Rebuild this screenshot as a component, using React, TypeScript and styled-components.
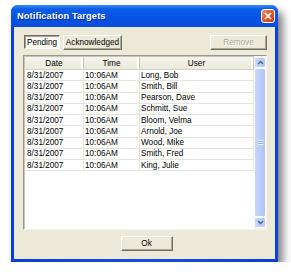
import React from "react";
import styled, { createGlobalStyle } from "styled-components";

const GlobalStyle = createGlobalStyle`
  html, body {
    margin: 0;
    padding: 0;
    background: #ffffff;
  }
  body {
    font-family: "Liberation Sans", Arial, sans-serif;
  }
`;

const Page = styled.div`
  padding: 5px 0 0 11px;
`;

const Window = styled.div`
  width: 267px;
  height: 257px;
  display: flex;
  flex-direction: column;
  border-radius: 7px 7px 0 0;
  overflow: hidden;
  box-shadow: 5px 6px 9px rgba(0, 0, 0, 0.5);
  background: #0838d8;
`;

const TitleBar = styled.div`
  height: 22px;
  flex: none;
  display: flex;
  align-items: center;
  justify-content: space-between;
  padding: 0 3px 0 6px;
  background: linear-gradient(
    to bottom,
    #3d8df5 0%,
    #0a5ee8 18%,
    #0552e4 60%,
    #0a4fd8 100%
  );
`;

const Title = styled.span`
  color: #ffffff;
  font-weight: bold;
  font-size: 9.3px;
  letter-spacing: 0.1px;
  text-shadow: 1px 1px 0 #0a2a8a;
`;

const CloseButton = styled.div`
  width: 14px;
  height: 14px;
  box-sizing: border-box;
  border: 1px solid #ffffff;
  border-radius: 3px;
  background: linear-gradient(135deg, #f09a78 0%, #e2582e 45%, #c23e14 100%);
  display: flex;
  align-items: center;
  justify-content: center;
`;

const Frame = styled.div`
  flex: 1;
  display: flex;
  padding: 0 3px 3px 3px;
  background: linear-gradient(to right, #0a3ed8, #1150e0 50%, #0a3ed8);
`;

const Content = styled.div`
  flex: 1;
  background: #ece9d8;
  display: flex;
  flex-direction: column;
  padding: 8px 8px 8px 9px;
`;

const Toolbar = styled.div`
  display: flex;
  align-items: center;
  gap: 3px;
  height: 14px;
  padding-left: 1px;
`;

const Spacer = styled.div`
  flex: 1;
`;

const Button = styled.div<{ $pressed?: boolean; $disabled?: boolean; $width: number }>`
  width: ${(p) => p.$width}px;
  height: ${(p) => (p.$pressed ? 14 : 15)}px;
  box-sizing: border-box;
  display: flex;
  align-items: center;
  justify-content: center;
  font-size: 8.2px;
  color: ${(p) => (p.$disabled ? "#aca899" : "#000000")};
  text-shadow: ${(p) => (p.$disabled ? "1px 1px 0 #ffffff" : "none")};
  background: ${(p) => (p.$pressed ? "#f8f7f2" : "#ece9d8")};
  border: 1px solid;
  border-color: ${(p) =>
    p.$pressed
      ? "#6e6d67 #ffffff #ffffff #6e6d67"
      : "#ffffff #716f64 #716f64 #ffffff"};
  box-shadow: ${(p) =>
    p.$pressed
      ? "inset 1px 1px 0 #a5a296"
      : "inset -1px -1px 0 #aca899"};
`;

const ListView = styled.div`
  margin-top: 6px;
  height: 175px;
  display: flex;
  box-sizing: border-box;
  border: 1px solid;
  border-color: #9a988b #f5f4ee #f5f4ee #9a988b;
  box-shadow: inset 1px 1px 0 #c9c6b8;
  background: #ffffff;
`;

const ListBody = styled.div`
  flex: 1;
  display: flex;
  flex-direction: column;
  padding: 1px 0 0 1px;
`;

const HeaderRow = styled.div`
  display: grid;
  grid-template-columns: 59px 56px 1fr;
  height: 13px;
  background: linear-gradient(to bottom, #f4f3ee, #ebeadb);
  border-bottom: 1px solid #d6d2c2;
  box-sizing: border-box;
`;

const HeaderCell = styled.div`
  display: flex;
  align-items: center;
  justify-content: center;
  font-size: 8.2px;
  color: #000000;
  border-right: 1px solid #c7c5b2;
  box-shadow: inset -2px 0 0 #ffffff;
`;

const Row = styled.div`
  display: grid;
  grid-template-columns: 59px 56px 1fr;
  height: 11.25px;
  box-sizing: border-box;
  border-bottom: 1px solid #e6e4dc;
`;

const Cell = styled.div<{ $first?: boolean }>`
  display: flex;
  align-items: center;
  padding-left: ${(p) => (p.$first ? 2 : 1)}px;
  font-size: 8.2px;
  color: #000000;
  border-right: 1px solid #e6e4dc;
  white-space: nowrap;
  overflow: hidden;
`;

const ScrollBar = styled.div`
  width: 12px;
  display: flex;
  flex-direction: column;
  background: #f3f1ec;
  padding: 1px 0 1px 0;
  box-sizing: border-box;
`;

const ScrollButton = styled.div`
  height: 11px;
  flex: none;
  box-sizing: border-box;
  border: 1px solid #ffffff;
  border-radius: 2px;
  background: linear-gradient(to right, #c6d6fc, #b4c8f6);
  display: flex;
  align-items: center;
  justify-content: center;
`;

const Thumb = styled.div`
  flex: 1;
  margin: 0;
  box-sizing: border-box;
  border: 1px solid #ffffff;
  border-radius: 2px;
  background: linear-gradient(to right, #c8d8fd, #b9ccf8 60%, #b0c4f4);
  display: flex;
  align-items: center;
  justify-content: center;
`;

const Grip = styled.div`
  width: 5px;
  height: 5px;
  background: repeating-linear-gradient(
    to bottom,
    #eef3ff 0px,
    #eef3ff 1px,
    #8faaf0 1px,
    #8faaf0 2px
  );
`;

const Footer = styled.div`
  display: flex;
  justify-content: center;
  margin-top: 6px;
  padding-left: 3px;
`;

const rows = [
  "Long, Bob",
  "Smith, Bill",
  "Pearson, Dave",
  "Schmitt, Sue",
  "Bloom, Velma",
  "Arnold, Joe",
  "Wood, Mike",
  "Smith, Fred",
  "King, Julie",
];

const Arrow = ({ up }: { up?: boolean }) => (
  <svg width="7" height="5" viewBox="0 0 7 5">
    <path
      d={up ? "M1 4 L3.5 1.5 L6 4" : "M1 1 L3.5 3.5 L6 1"}
      fill="none"
      stroke="#4d6185"
      strokeWidth="1.4"
    />
  </svg>
);

export default function App() {
  return (
    <>
      <GlobalStyle />
      <Page>
        <Window>
          <TitleBar>
            <Title>Notification Targets</Title>
            <CloseButton>
              <svg width="8" height="8" viewBox="0 0 8 8">
                <path d="M1 1 L7 7 M7 1 L1 7" stroke="#ffffff" strokeWidth="1.6" />
              </svg>
            </CloseButton>
          </TitleBar>
          <Frame>
            <Content>
              <Toolbar>
                <Button $pressed $width={36}>Pending</Button>
                <Button $width={59}>Acknowledged</Button>
                <Spacer />
                <Button $disabled $width={57}>Remove</Button>
              </Toolbar>
              <ListView>
                <ListBody>
                  <HeaderRow>
                    <HeaderCell>Date</HeaderCell>
                    <HeaderCell>Time</HeaderCell>
                    <HeaderCell>User</HeaderCell>
                  </HeaderRow>
                  {rows.map((name) => (
                    <Row key={name}>
                      <Cell $first>8/31/2007</Cell>
                      <Cell>10:06AM</Cell>
                      <Cell>{name}</Cell>
                    </Row>
                  ))}
                </ListBody>
                <ScrollBar>
                  <ScrollButton>
                    <Arrow up />
                  </ScrollButton>
                  <Thumb>
                    <Grip />
                  </Thumb>
                  <ScrollButton>
                    <Arrow />
                  </ScrollButton>
                </ScrollBar>
              </ListView>
              <Footer>
                <Button $width={52}>Ok</Button>
              </Footer>
            </Content>
          </Frame>
        </Window>
      </Page>
    </>
  );
}
